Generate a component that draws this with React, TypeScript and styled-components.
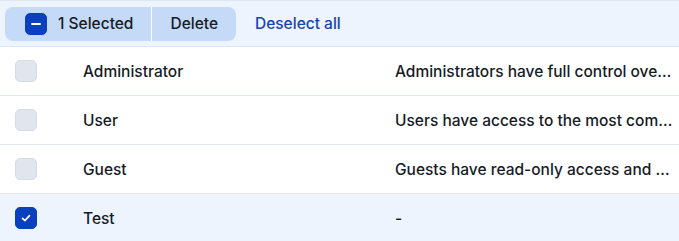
import React from "react";
import styled, { createGlobalStyle } from "styled-components";

const GlobalStyle = createGlobalStyle`
  body {
    margin: 0;
    background: #ffffff;
    font-family: Inter, "Noto Sans", sans-serif;
    color: #161b26;
  }
`;

type Role = { name: string; description: string; checked: boolean };

const roles: Role[] = [
  {
    name: "Administrator",
    description: "Administrators have full control over the organization and all of its settings",
    checked: false,
  },
  {
    name: "User",
    description: "Users have access to the most common features of the workspace",
    checked: false,
  },
  {
    name: "Guest",
    description: "Guests have read-only access and cannot change anything",
    checked: false,
  },
  { name: "Test", description: "-", checked: true },
];

const App = () => {
  return (
    <>
      <GlobalStyle />
      <Table>
        <Toolbar>
          <ActionGroup>
            <SelectedPart>
              <Box $checked>
                <Minus />
              </Box>
              1 Selected
            </SelectedPart>
            <DeletePart>Delete</DeletePart>
          </ActionGroup>
          <LinkButton>Deselect all</LinkButton>
        </Toolbar>
        {roles.map((r) => (
          <Row key={r.name} $selected={r.checked}>
            <CheckCell>
              <Box $checked={r.checked}>
                {r.checked && (
                  <svg width="12" height="12" viewBox="0 0 12 12" fill="none">
                    <path
                      d="M2.5 6.3 L4.9 8.6 L9.5 3.6"
                      stroke="#ffffff"
                      strokeWidth="1.6"
                      strokeLinecap="round"
                      strokeLinejoin="round"
                    />
                  </svg>
                )}
              </Box>
            </CheckCell>
            <NameCell>{r.name}</NameCell>
            <DescCell>{r.description}</DescCell>
          </Row>
        ))}
      </Table>
    </>
  );
};

export default App;

const Table = styled.div`
  width: 679px;
  display: flex;
  flex-direction: column;
`;

const Toolbar = styled.div`
  height: 45px;
  display: flex;
  align-items: center;
  padding-left: 5px;
  background: #edf4fd;
  border-top: 1px solid #dde6f3;
  border-bottom: 1px solid #dde6f3;
`;

const ActionGroup = styled.div`
  display: flex;
  height: 34px;
  border-radius: 8px;
  background: #c4daf7;
  overflow: hidden;
`;

const SelectedPart = styled.div`
  display: flex;
  align-items: center;
  gap: 11px;
  padding: 0 18px 0 20px;
  font-size: 15.5px;
  font-weight: 500;
  color: #161b26;
  border-right: 1px solid #ffffff;
`;

const DeletePart = styled.div`
  display: flex;
  align-items: center;
  padding: 0 18px;
  font-size: 15.5px;
  font-weight: 500;
  color: #161b26;
`;

const LinkButton = styled.div`
  margin-left: 19px;
  font-size: 15.5px;
  font-weight: 500;
  color: #1744b3;
`;

const Box = styled.span<{ $checked?: boolean }>`
  width: 22px;
  height: 22px;
  box-sizing: border-box;
  border-radius: 5px;
  display: flex;
  align-items: center;
  justify-content: center;
  flex-shrink: 0;
  background: ${(p) => (p.$checked ? "#0a3fbd" : "#e1e6ee")};
  border: 1px solid ${(p) => (p.$checked ? "#0a3fbd" : "#d6dce6")};
`;

const Minus = styled.span`
  width: 10px;
  height: 2px;
  border-radius: 1px;
  background: #ffffff;
`;

const Row = styled.div<{ $selected?: boolean }>`
  height: 48px;
  display: grid;
  grid-template-columns: 83px 312px 1fr;
  align-items: center;
  border-bottom: 1px solid #e2e7ee;
  background: ${(p) => (p.$selected ? "#edf4fd" : "#ffffff")};
  font-size: 15.5px;
  font-weight: 500;
  &:last-child {
    border-bottom: none;
  }
`;

const CheckCell = styled.div`
  padding-left: 15px;
  display: flex;
  align-items: center;
`;

const NameCell = styled.div`
  white-space: nowrap;
`;

const DescCell = styled.div`
  padding-right: 4px;
  white-space: nowrap;
  overflow: hidden;
  text-overflow: ellipsis;
`;
